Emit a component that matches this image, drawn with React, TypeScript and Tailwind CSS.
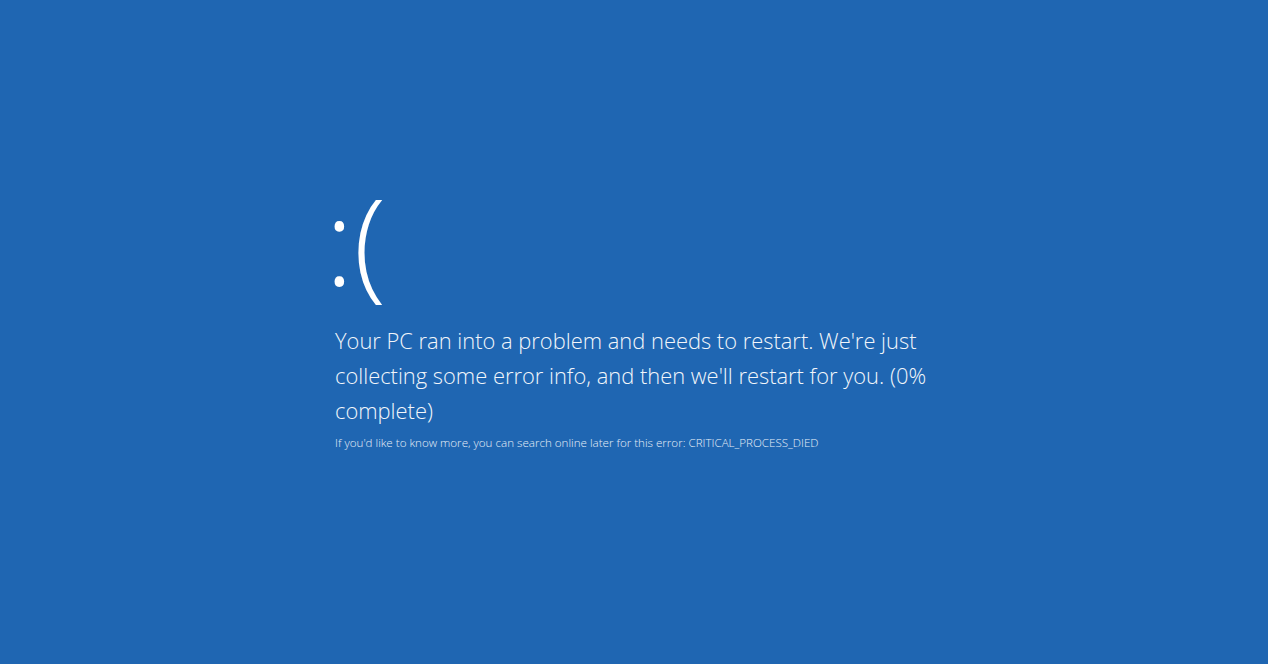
export default function App() {
  return (
    <div
      className="w-[1268px] h-[664px] bg-[#1f66b2] text-white overflow-hidden"
      style={{ fontFamily: '"Open Sans", "Noto Sans", sans-serif' }}
    >
      <div className="flex flex-col pl-[335px] pt-[172px]">
        <div className="h-[128px] -ml-[10px] text-[120px] leading-[136px] font-light">:(</div>
        <div className="mt-[23px] w-[640px] text-[21.9px] leading-[35px] font-light text-[#f2f6fb]">
          Your PC ran into a problem and needs to restart. We're just collecting some error info, and then we'll restart for you. (0% complete)
        </div>
        <div className="mt-[8px] text-[11.6px] leading-[14px] text-[#e6eef8] font-light">
          If you'd like to know more, you can search online later for this error: CRITICAL_PROCESS_DIED
        </div>
      </div>
    </div>
  );
}
